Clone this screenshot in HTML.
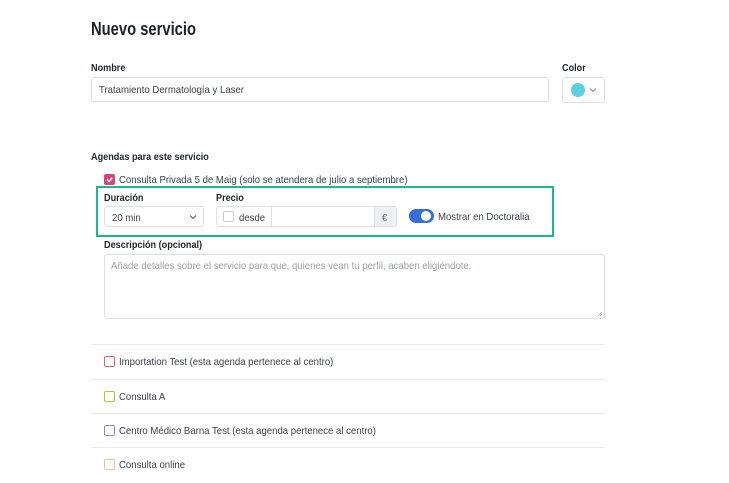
<!DOCTYPE html>
<html><head><meta charset="utf-8"><style>
*{box-sizing:border-box;margin:0;padding:0}
body{width:729px;height:483px;background:#fff;font-family:"Liberation Sans",sans-serif;color:#2a2f36;position:relative;overflow:hidden}
.a{position:absolute;white-space:nowrap}
.lbl{font-size:10px;font-weight:bold;color:#1f252c;margin-top:2px;transform:scaleX(0.91);transform-origin:left}
.box{position:absolute;border:1px solid #dcdfe3;border-radius:3px;background:#fff}
.t{font-size:10.3px;color:#3a4048;margin-top:1.5px;transform:scaleX(0.93);transform-origin:left}
.sep{position:absolute;left:91px;width:514px;height:1px;background:#e8eaed}
.cb{position:absolute;width:11px;height:11px;border-radius:2px;border:1.5px solid}
</style></head><body>
<div class="a" style="left:91px;top:19px;font-size:18px;font-weight:bold;color:#1b2128;transform:scaleX(0.82);transform-origin:left">Nuevo servicio</div>
<div class="a lbl" style="left:91px;top:61px">Nombre</div>
<div class="box" style="left:91px;top:77px;width:458px;height:25px"></div>
<div class="a t" style="left:99px;top:83px">Tratamiento Dermatología y Laser</div>
<div class="a lbl" style="left:562px;top:61px">Color</div>
<div class="box" style="left:562px;top:77px;width:43px;height:26px"></div>
<div class="a" style="left:571px;top:83px;width:14px;height:14px;border-radius:50%;background:#5ad1dc"></div>
<svg class="a" style="left:589px;top:87px" width="8" height="6"><path d="M1 1.5 L4 4.5 L7 1.5" stroke="#888" fill="none" stroke-width="1"/></svg>

<div class="a lbl" style="left:91px;top:150px">Agendas para este servicio</div>
<div class="a" style="left:104px;top:174px;width:11px;height:11px;border-radius:2px;background:#d3467d"></div>
<svg class="a" style="left:104px;top:174px" width="11" height="11"><path d="M3 5.5 L5 7.5 L8.2 3.8" stroke="#fff" fill="none" stroke-width="1.5"/></svg>
<div class="a t" style="left:119px;top:173px">Consulta Privada 5 de Maig (solo se atendera de julio a septiembre)</div>

<div class="a" style="left:96px;top:186px;width:458px;height:51px;border:2px solid #1cb892"></div>
<div class="a lbl" style="left:104px;top:191px">Duración</div>
<div class="box" style="left:104px;top:206px;width:100px;height:21px"></div>
<div class="a t" style="left:112px;top:211px">20 min</div>
<svg class="a" style="left:189px;top:214px" width="8" height="6"><path d="M1 1.5 L4 4.5 L7 1.5" stroke="#555" fill="none" stroke-width="1"/></svg>
<div class="a lbl" style="left:216px;top:191px">Precio</div>
<div class="box" style="left:216px;top:206px;width:181px;height:21px;overflow:hidden">
 <div class="a" style="left:54px;top:0;width:1px;height:21px;background:#dcdfe3"></div>
 <div class="a" style="left:157px;top:0;width:23px;height:21px;background:#eef0f2;border-left:1px solid #dcdfe3"></div>
</div>
<div class="a" style="left:223px;top:211px;width:11px;height:11px;border:1px solid #c8ccd1;border-radius:2px"></div>
<div class="a t" style="left:239px;top:211px">desde</div>
<div class="a t" style="left:382px;top:211px;color:#666">€</div>
<div class="a" style="left:409px;top:209px;width:25px;height:14px;border-radius:7px;background:#3570d8"></div>
<div class="a" style="left:421px;top:211px;width:10px;height:10px;border-radius:50%;background:#fff"></div>
<div class="a t" style="left:438px;top:210px">Mostrar en Doctoralia</div>

<div class="a lbl" style="left:104px;top:238px">Descripción (opcional)</div>
<div class="box" style="left:104px;top:254px;width:501px;height:65px"></div>
<div class="a t" style="left:111px;top:259px;color:#9aa0a6">Añade detalles sobre el servicio para que, quienes vean tu perfil, acaben eligiéndote.</div>
<svg class="a" style="left:597px;top:311px" width="6" height="6"><path d="M1 5 L5 1 M3 5 L5 3" stroke="#999" stroke-width="0.7"/></svg>

<div class="sep" style="top:344px"></div>
<div class="cb" style="left:104px;top:356px;border-color:#e8626d"></div>
<div class="a t" style="left:119px;top:355px">Importation Test (esta agenda pertenece al centro)</div>
<div class="sep" style="top:379px"></div>
<div class="cb" style="left:104px;top:391px;border-color:#a8c83a"></div>
<div class="a t" style="left:119px;top:390px">Consulta A</div>
<div class="sep" style="top:413px"></div>
<div class="cb" style="left:104px;top:425px;border-color:#8c88e0"></div>
<div class="a t" style="left:119px;top:424px">Centro Médico Barna Test (esta agenda pertenece al centro)</div>
<div class="sep" style="top:447px"></div>
<div class="cb" style="left:104px;top:459px;border-color:#e4c4a4"></div>
<div class="a t" style="left:119px;top:458px">Consulta online</div>
</body></html>
